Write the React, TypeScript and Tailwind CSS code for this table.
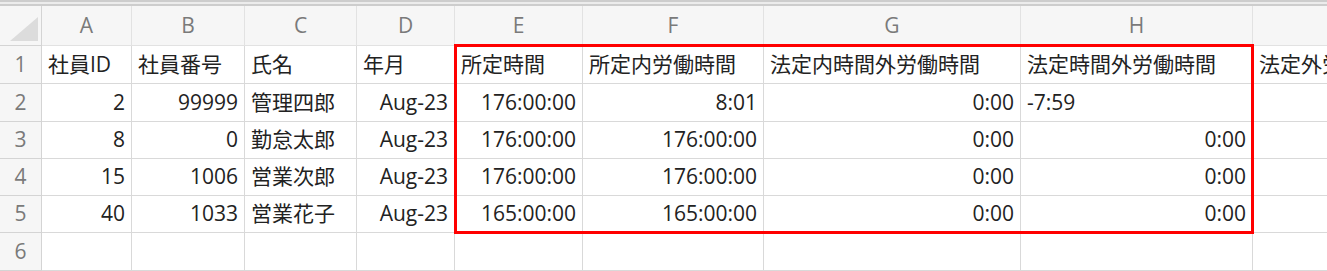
const COLS = ['A', 'B', 'C', 'D', 'E', 'F', 'G', 'H', ''];

type Cell = { v: string; r?: boolean };

const ROWS: Cell[][] = [
  [{ v: '社員ID' }, { v: '社員番号' }, { v: '氏名' }, { v: '年月' }, { v: '所定時間' }, { v: '所定内労働時間' }, { v: '法定内時間外労働時間' }, { v: '法定時間外労働時間' }, { v: '法定外労働時間' }],
  [{ v: '2', r: true }, { v: '99999', r: true }, { v: '管理四郎' }, { v: 'Aug-23', r: true }, { v: '176:00:00', r: true }, { v: '8:01', r: true }, { v: '0:00', r: true }, { v: '-7:59' }, { v: '' }],
  [{ v: '8', r: true }, { v: '0', r: true }, { v: '勤怠太郎' }, { v: 'Aug-23', r: true }, { v: '176:00:00', r: true }, { v: '176:00:00', r: true }, { v: '0:00', r: true }, { v: '0:00', r: true }, { v: '' }],
  [{ v: '15', r: true }, { v: '1006', r: true }, { v: '営業次郎' }, { v: 'Aug-23', r: true }, { v: '176:00:00', r: true }, { v: '176:00:00', r: true }, { v: '0:00', r: true }, { v: '0:00', r: true }, { v: '' }],
  [{ v: '40', r: true }, { v: '1033', r: true }, { v: '営業花子' }, { v: 'Aug-23', r: true }, { v: '165:00:00', r: true }, { v: '165:00:00', r: true }, { v: '0:00', r: true }, { v: '0:00', r: true }, { v: '' }],
  Array.from({ length: 9 }, () => ({ v: '' })),
];

const ROW_H = ['h-[38px]', 'h-[38px]', 'h-[37px]', 'h-[37px]', 'h-[37px]', 'h-[38px]'];

export default function App() {
  return (
    <div className="w-[1327px] h-[271px] overflow-hidden bg-white text-[#222]"
      style={{ fontFamily: '"Open Sans", "Noto Sans CJK JP", sans-serif' }}>
      {/* top strip */}
      <div className="h-[6px] bg-[#ececec] border-t-2 border-b-2 border-[#cdcdcd]" />

      <div className="relative">
        <div className="grid grid-cols-[42px_90px_113px_112px_98px_128px_181px_257px_232px_80px]">
          {/* column headers */}
          <div className="h-[40px] bg-[#f6f6f6] border-r border-b border-[#d4d4d4] relative">
            <svg className="absolute left-[10px] top-[11px]" width="28" height="24" viewBox="0 0 28 24">
              <polygon points="28,0 28,24 0,24" fill="#dcdcdc" />
            </svg>
          </div>
          {COLS.map((c, i) => (
            <div key={i} className="h-[40px] bg-[#f6f6f6] border-r border-b border-[#e2e2e2] flex items-center justify-center text-[21px] text-[#7a7a7a]">
              {c}
            </div>
          ))}

          {/* rows */}
          {ROWS.map((row, ri) => (
            <div key={ri} className="contents">
              <div className={`${ROW_H[ri]} bg-[#f6f6f6] border-r border-b border-[#d4d4d4] flex items-center justify-center text-[21px] text-[#7a7a7a]`}>
                {ri + 1}
              </div>
              {row.map((cell, ci) => (
                <div key={ci}
                  className={`${ROW_H[ri]} border-r border-b border-[#d9d9d9] flex items-center px-[6px] text-[21px] whitespace-nowrap overflow-hidden ${cell.r ? 'justify-end' : 'justify-start'}`}>
                  {cell.v}
                </div>
              ))}
            </div>
          ))}
        </div>

        {/* selection box */}
        <div className="absolute left-[454px] top-[38px] w-[800px] h-[190px] border-[3px] border-[#ff0000] pointer-events-none" />
      </div>
    </div>
  );
}
